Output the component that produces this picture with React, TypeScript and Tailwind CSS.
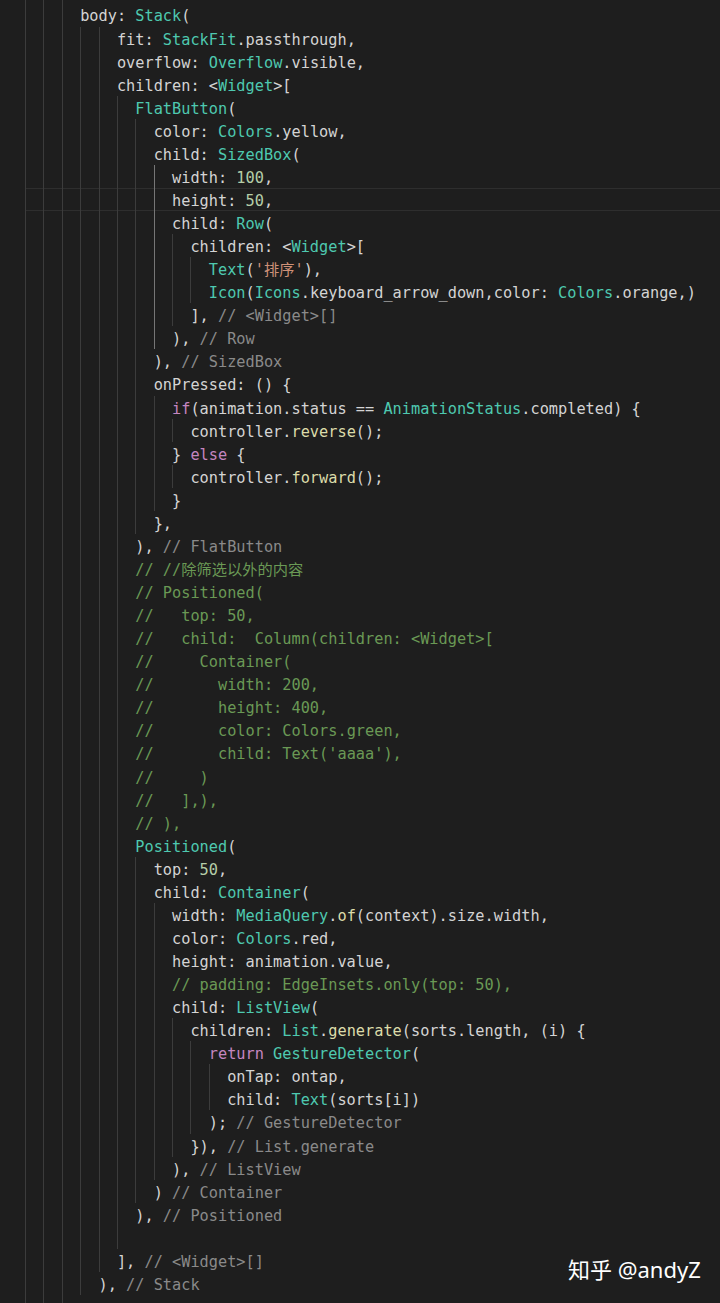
import { FC } from 'react';

const tone: Record<string, string> = {
  t: 'text-[#4ec9b0]',
  n: 'text-[#b5cea8]',
  s: 'text-[#ce9178]',
  c: 'text-[#6a9955]',
  k: 'text-[#c586c0]',
  f: 'text-[#dcdcaa]',
  l: 'text-[#8a8a8a]',
};

// [indent, markup] — {{x:...}} picks a colour from tone
const lines: [number, string][] = [
  [6, ''],
  [6, 'body: {{t:Stack}}('],
  [10, 'fit: {{t:StackFit}}.passthrough,'],
  [10, 'overflow: {{t:Overflow}}.visible,'],
  [10, 'children: <{{t:Widget}}>['],
  [12, '{{t:FlatButton}}('],
  [14, 'color: {{t:Colors}}.yellow,'],
  [14, 'child: {{t:SizedBox}}('],
  [16, 'width: {{n:100}},'],
  [16, 'height: {{n:50}},'],
  [16, 'child: {{t:Row}}('],
  [18, 'children: <{{t:Widget}}>['],
  [20, "{{t:Text}}({{s:'排序'}}),"],
  [20, '{{t:Icon}}({{t:Icons}}.keyboard_arrow_down,color: {{t:Colors}}.orange,)'],
  [18, '], {{l:// <Widget>[]}}'],
  [16, '), {{l:// Row}}'],
  [14, '), {{l:// SizedBox}}'],
  [14, 'onPressed: () {'],
  [16, '{{k:if}}(animation.status == {{t:AnimationStatus}}.completed) {'],
  [18, 'controller.{{f:reverse}}();'],
  [16, '} {{k:else}} {'],
  [18, 'controller.{{f:forward}}();'],
  [16, '}'],
  [14, '},'],
  [12, '), {{l:// FlatButton}}'],
  [12, '{{c:// //除筛选以外的内容}}'],
  [12, '{{c:// Positioned(}}'],
  [12, '{{c://   top: 50,}}'],
  [12, '{{c://   child:  Column(children: <Widget>[}}'],
  [12, '{{c://     Container(}}'],
  [12, '{{c://       width: 200,}}'],
  [12, '{{c://       height: 400,}}'],
  [12, '{{c://       color: Colors.green,}}'],
  [12, "{{c://       child: Text('aaaa'),}}"],
  [12, '{{c://     )}}'],
  [12, '{{c://   ],),}}'],
  [12, '{{c:// ),}}'],
  [12, '{{t:Positioned}}('],
  [14, 'top: {{n:50}},'],
  [14, 'child: {{t:Container}}('],
  [16, 'width: {{t:MediaQuery}}.{{f:of}}(context).size.width,'],
  [16, 'color: {{t:Colors}}.red,'],
  [16, 'height: animation.value,'],
  [16, '{{c:// padding: EdgeInsets.only(top: 50),}}'],
  [16, 'child: {{t:ListView}}('],
  [18, 'children: {{t:List}}.{{f:generate}}(sorts.length, (i) {'],
  [20, '{{k:return}} {{t:GestureDetector}}('],
  [22, 'onTap: ontap,'],
  [22, 'child: {{t:Text}}(sorts[i])'],
  [20, '); {{l:// GestureDetector}}'],
  [18, '}), {{l:// List.generate}}'],
  [16, '), {{l:// ListView}}'],
  [14, ') {{l:// Container}}'],
  [12, '), {{l:// Positioned}}'],
  [12, ''],
  [10, '], {{l:// <Widget>[]}}'],
  [8, '), {{l:// Stack}}'],
  [6, ''],
];

const CURRENT = 9;
const ACTIVE_COL = 14;
const ACTIVE_FROM = 8;
const ACTIVE_TO = 15;

const renderCode = (src: string) => {
  const out: JSX.Element[] = [];
  const re = /\{\{(\w):(.*?)\}\}/g;
  let last = 0;
  let m: RegExpExecArray | null;
  let i = 0;
  while ((m = re.exec(src))) {
    if (m.index > last) out.push(<span key={i++}>{src.slice(last, m.index)}</span>);
    out.push(
      <span key={i++} className={tone[m[1]]}>
        {m[2]}
      </span>
    );
    last = m.index + m[0].length;
  }
  if (last < src.length) out.push(<span key={i++}>{src.slice(last)}</span>);
  return out;
};

const CodeLine: FC<{ idx: number; indent: number; src: string }> = ({ idx, indent, src }) => {
  const guides = Array.from({ length: indent / 2 }, (_, g) => g * 2);
  const current = idx === CURRENT;
  return (
    <div
      className={`flex h-[23.07px] ${
        current ? 'shadow-[inset_0_1px_0_#2e2e2e,inset_0_-1px_0_#2e2e2e]' : ''
      }`}
    >
      {guides.map((col) => {
        const active = col === ACTIVE_COL && idx >= ACTIVE_FROM && idx <= ACTIVE_TO;
        return (
          <span
            key={col}
            className={`w-[2ch] shrink-0 border-l ${active ? 'border-[#767676]' : 'border-[#3c3c3c]'}`}
          />
        );
      })}
      <span className="whitespace-pre leading-[23.07px] pt-[2px]">{renderCode(src)}</span>
    </div>
  );
};

const App: FC = () => {
  return (
    <div className="relative w-[720px] h-[1303px] overflow-hidden bg-[#1e1e1e]">
      <div className="-mt-[19.61px] pl-[25px] text-[15.28px] text-[#d4d4d4] font-['DejaVu_Sans_Mono','Noto_Sans_CJK_SC',monospace]">
        {lines.map(([indent, src], idx) => (
          <CodeLine key={idx} idx={idx} indent={indent} src={src} />
        ))}
      </div>

      <div className="absolute left-[568px] top-[1255px] text-[22px] leading-[28px] text-white font-['Noto_Sans','Noto_Sans_CJK_SC',sans-serif] whitespace-nowrap">
        知乎 @andyZ
      </div>
    </div>
  );
};

export default App;
